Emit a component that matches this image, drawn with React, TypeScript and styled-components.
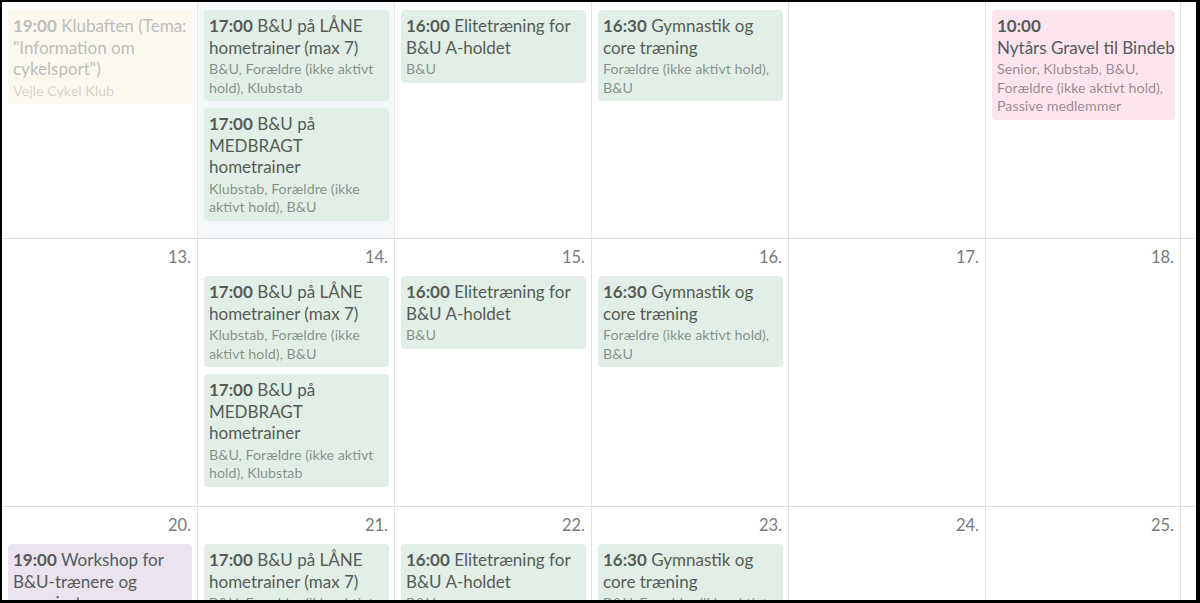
import { FC } from "react";
import styled, { createGlobalStyle, css } from "styled-components";

type Tone = "green" | "pink" | "purple" | "cream";

type CalEvent = {
  time: string;
  title: string;
  meta: string;
  tone: Tone;
  faded?: boolean;
};

type Day = {
  date?: number;
  today?: boolean;
  events: CalEvent[];
};

const lane = (meta: string): CalEvent => ({
  time: "17:00",
  title: "B&U på LÅNE hometrainer (max 7)",
  meta,
  tone: "green",
});

const medbragt = (meta: string): CalEvent => ({
  time: "17:00",
  title: "B&U på MEDBRAGT hometrainer",
  meta,
  tone: "green",
});

const elite = (meta: string): CalEvent => ({
  time: "16:00",
  title: "Elitetræning for B&U A-holdet",
  meta,
  tone: "green",
});

const gym = (meta: string): CalEvent => ({
  time: "16:30",
  title: "Gymnastik og core træning",
  meta,
  tone: "green",
});

const weeks: Day[][] = [
  [
    {
      events: [
        {
          time: "19:00",
          title: 'Klubaften (Tema: "Information om cykelsport")',
          meta: "Vejle Cykel Klub",
          tone: "cream",
          faded: true,
        },
      ],
    },
    {
      today: true,
      events: [
        lane("B&U, Forældre (ikke aktivt hold), Klubstab"),
        medbragt("Klubstab, Forældre (ikke aktivt hold), B&U"),
      ],
    },
    { events: [elite("B&U")] },
    { events: [gym("Forældre (ikke aktivt hold), B&U")] },
    { events: [] },
    {
      events: [
        {
          time: "10:00",
          title: "Nytårs\u00a0Gravel\u00a0til\u00a0Bindeballe",
          meta: "Senior, Klubstab, B&U, Forældre (ikke aktivt hold), Passive medlemmer",
          tone: "pink",
        },
      ],
    },
    { events: [] },
  ],
  [
    { date: 13, events: [] },
    {
      date: 14,
      events: [
        lane("Klubstab, Forældre (ikke aktivt hold), B&U"),
        medbragt("B&U, Forældre (ikke aktivt hold), Klubstab"),
      ],
    },
    { date: 15, events: [elite("B&U")] },
    { date: 16, events: [gym("Forældre (ikke aktivt hold), B&U")] },
    { date: 17, events: [] },
    { date: 18, events: [] },
    { events: [] },
  ],
  [
    {
      date: 20,
      events: [
        {
          time: "19:00",
          title: "Workshop for B&U-trænere og organisatorer",
          meta: "Klubstab, Senior",
          tone: "purple",
        },
      ],
    },
    { date: 21, events: [lane("B&U, Forældre (ikke aktivt hold), Klubstab")] },
    { date: 22, events: [elite("B&U")] },
    { date: 23, events: [gym("B&U, Forældre (ikke aktivt hold)")] },
    { date: 24, events: [] },
    { date: 25, events: [] },
    { events: [] },
  ],
];

const rowHeights = [237, 268, 300];

export default function App() {
  return (
    <>
      <GlobalStyle />
      <Frame>
        {weeks.map((week, w) => (
          <Week key={w} height={rowHeights[w]}>
            {week.map((day, d) => (
              <DayCell key={d} today={day.today} cut={w === 0}>
                {day.date !== undefined && <DateNo>{day.date}.</DateNo>}
                {day.events.map((ev, i) => (
                  <EventCard key={i} event={ev} />
                ))}
              </DayCell>
            ))}
          </Week>
        ))}
      </Frame>
    </>
  );
}

const EventCard: FC<{ event: CalEvent }> = ({ event }) => (
  <Card tone={event.tone} faded={event.faded}>
    <Title>
      <Time>{event.time}</Time> {event.title}
    </Title>
    <Meta>{event.meta}</Meta>
  </Card>
);

const GlobalStyle = createGlobalStyle`
  html, body {
    margin: 0;
    padding: 0;
    background: #fff;
  }
  body {
    font-family: Lato, "Open Sans", "Liberation Sans", sans-serif;
  }
  * {
    box-sizing: border-box;
  }
`;

const Frame = styled.div`
  width: 1200px;
  height: 603px;
  overflow: hidden;
  background: #fff;
  border-style: solid;
  border-color: #000;
  border-width: 2px 4px 3px 2px;
`;

const Week = styled.div<{ height: number }>`
  display: grid;
  grid-template-columns: 196px 197px 197px 197px 197px 195px 197px;
  height: ${p => p.height}px;
  border-bottom: 1px solid #dedede;
`;

const DayCell = styled.div<{ today?: boolean; cut?: boolean }>`
  display: flex;
  flex-direction: column;
  gap: 7px;
  min-width: 0;
  padding: ${p => (p.cut ? "8px" : "7px")} 5px 0 6px;
  border-right: 1px solid #e2e2e2;
  background: ${p => (p.today ? "#f2f8fc" : "#fff")};
  overflow: hidden;
`;

const DateNo = styled.div`
  text-align: right;
  font-size: 16.5px;
  line-height: 22px;
  color: #7a7a7a;
  padding-right: 1px;
  margin-bottom: 1px;
`;

const tones: Record<Tone, string> = {
  green: "#e1efe6",
  pink: "#fde4ee",
  purple: "#ebe3ef",
  cream: "#faf0d7",
};

const Card = styled.div<{ tone: Tone; faded?: boolean }>`
  flex-shrink: 0;
  padding: 5px 5px 4px;
  border-radius: 4px;
  overflow: hidden;
  background: ${p => tones[p.tone]};
  ${p =>
    p.faded &&
    css`
      opacity: 0.4;
    `}
`;

const Title = styled.div`
  font-size: 17px;
  line-height: 21.5px;
  color: #565b58;
`;

const Time = styled.span`
  font-weight: 700;
`;

const Meta = styled.div`
  margin-top: 2px;
  font-size: 14.3px;
  line-height: 18.5px;
  color: rgba(0, 0, 0, 0.42);
`;
